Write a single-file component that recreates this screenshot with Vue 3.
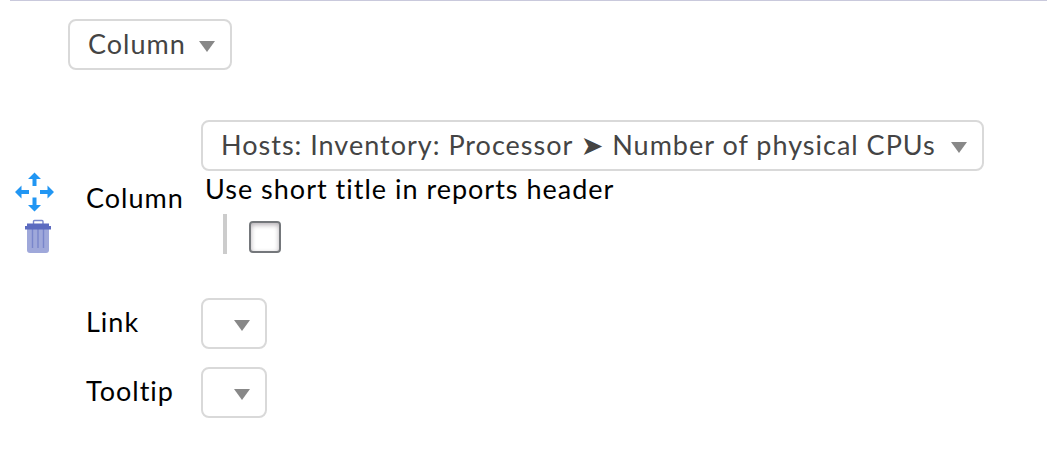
<script setup>
import { ref } from 'vue'

const kind = ref('Column')
const column = ref('Hosts: Inventory: Processor ➤ Number of physical CPUs')
const link = ref('')
const tooltip = ref('')
const shortTitle = ref(false)
</script>

<template>
  <main class="editor">
    <div class="picker kind">
      <select v-model="kind" aria-label="Entry type">
        <option>Column</option>
      </select>
      <svg class="arrow" viewBox="0 0 16 11" aria-hidden="true"><path d="M0 0H16L8 11Z" /></svg>
    </div>

    <div class="entry">
      <div class="actions">
        <button type="button" aria-label="Move this entry">
          <svg width="40" height="40" viewBox="0 0 40 40" fill="#2196f3" aria-hidden="true">
            <path d="M20.5 0.5L27 7H22.5V14H18.5V7H14Z" />
            <path d="M20.5 39.5L27 33H22.5V25.5H18.5V33H14Z" />
            <path d="M1 20L7.500 13.500V18H15V22H7.500V26.500Z" />
            <path d="M40 20L33.500 13.500V18H26V22H33.500V26.500Z" />
          </svg>
        </button>
        <button type="button" aria-label="Delete this entry">
          <svg width="40" height="36" viewBox="0 0 40 36" aria-hidden="true">
            <path d="M13 9H35V31Q35 34 32 34H16Q13 34 13 31Z" fill="#9fa8da" />
            <path d="M18.5 10V29M24 10V29M29.5 10V29" stroke="#7986cb" stroke-width="1.4" />
            <path d="M19.500 5V2.500Q19.500 1.500 20.500 1.500H28Q29 1.500 29 2.500V5" fill="none" stroke="#7986cb" stroke-width="1.4" />
            <path d="M13 4.500H35V7H37V10.500H11V7H13Z" fill="#5c6bc0" />
          </svg>
        </button>
      </div>

      <div class="fields">
        <label class="name main" for="column">Column</label>
        <div class="value main">
          <div class="picker">
            <select id="column" v-model="column">
              <option>Hosts: Inventory: Processor ➤ Number of physical CPUs</option>
            </select>
            <svg class="arrow" viewBox="0 0 16 11" aria-hidden="true"><path d="M0 0H16L8 11Z" /></svg>
          </div>
          <label class="option" for="short">Use short title in reports header</label>
          <div class="nested">
            <input id="short" v-model="shortTitle" type="checkbox" />
          </div>
        </div>

        <label class="name" for="link">Link</label>
        <div class="picker">
          <select id="link" v-model="link"><option value=""></option></select>
          <svg class="arrow" viewBox="0 0 16 11" aria-hidden="true"><path d="M0 0H16L8 11Z" /></svg>
        </div>

        <label class="name" for="tooltip">Tooltip</label>
        <div class="picker">
          <select id="tooltip" v-model="tooltip"><option value=""></option></select>
          <svg class="arrow" viewBox="0 0 16 11" aria-hidden="true"><path d="M0 0H16L8 11Z" /></svg>
        </div>
      </div>
    </div>
  </main>
</template>

<style>
body {
  background: #fff;
}
</style>

<style scoped>
.editor {
  margin-left: 10px;
  border-top: 1px solid #c9c9dc;
  font: 27px/34px Lato, "DejaVu Sans", sans-serif;
  letter-spacing: 1px;
  color: #000;
}
.picker {
  position: relative;
  width: fit-content;
}
.picker select {
  display: block;
  appearance: none;
  box-sizing: border-box;
  height: 51px;
  margin: 0;
  padding: 0 44px 2px 18px;
  border: 2px solid #d9d9d9;
  border-radius: 8px;
  background: #fff;
  color: #444;
  font: inherit;
  letter-spacing: inherit;
}
.arrow {
  position: absolute;
  top: 22px;
  right: 17px;
  width: 16px;
  height: 11px;
  fill: #888;
  pointer-events: none;
}
.kind {
  margin: 18px 0 50px 58px;
}
.entry {
  display: flex;
}
.actions {
  display: flex;
  flex-direction: column;
  gap: 7px;
  margin: 52px 32px 0 4px;
}
.actions button {
  padding: 0;
  border: 0;
  background: none;
}
.actions svg {
  display: block;
}
.fields {
  display: grid;
  grid-template-columns: 97px auto;
  column-gap: 18px;
  row-gap: 18px;
  align-items: center;
}
.name {
  padding-bottom: 4px;
}
.value.main {
  margin-bottom: 26px;
}
.option {
  display: block;
  margin: 1px 0 8px 4px;
}
.nested {
  display: flex;
  align-items: center;
  height: 40px;
  margin-left: 22px;
  padding-left: 22px;
  border-left: 4px solid #ccc;
}
.nested input {
  appearance: none;
  box-sizing: border-box;
  width: 32px;
  height: 32px;
  margin: 6px 0 0;
  border: 2px solid #74777b;
  border-radius: 4px;
  background: #fff;
  box-shadow: inset 0 2px 5px #b5b0b5;
}
.nested input:checked {
  background: #74777b;
}
</style>
